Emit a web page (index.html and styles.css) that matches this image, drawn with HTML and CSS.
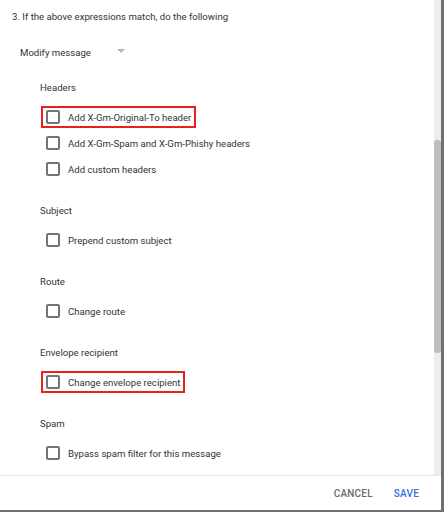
FILE: index.html
```html
<!DOCTYPE html>
<html>
<head>
<meta charset="utf-8">
<link rel="stylesheet" href="styles.css">
</head>
<body>
<div class="dialog">
  <div class="scroll">
    <div class="content">
      <div class="title">3. If the above expressions match, do the following</div>
      <div class="select">Modify message <span class="caret"></span></div>

      <div class="section">
        <div class="label">Headers</div>
        <div class="row"><span class="opt hl"><span class="box"></span>Add X-Gm-Original-To header</span></div>
        <div class="row"><span class="opt"><span class="box"></span>Add X-Gm-Spam and X-Gm-Phishy headers</span></div>
        <div class="row"><span class="opt"><span class="box"></span>Add custom headers</span></div>
      </div>

      <div class="section">
        <div class="label">Subject</div>
        <div class="row"><span class="opt"><span class="box"></span>Prepend custom subject</span></div>
      </div>

      <div class="section">
        <div class="label">Route</div>
        <div class="row"><span class="opt"><span class="box"></span>Change route</span></div>
      </div>

      <div class="section">
        <div class="label">Envelope recipient</div>
        <div class="row"><span class="opt hl"><span class="box"></span>Change envelope recipient</span></div>
      </div>

      <div class="section">
        <div class="label">Spam</div>
        <div class="row"><span class="opt"><span class="box"></span>Bypass spam filter for this message</span></div>
      </div>
    </div>
    <div class="track"><div class="thumb"></div></div>
  </div>
  <div class="footer">
    <span class="btn cancel">CANCEL</span>
    <span class="btn save">SAVE</span>
  </div>
</div>
</body>
</html>
```

FILE: styles.css
```css
html, body {
  margin: 0;
  padding: 0;
}
body {
  background: #6f6f6f;
  width: 444px;
  height: 512px;
  overflow: hidden;
  font-family: Roboto, "Liberation Sans", Arial, sans-serif;
  font-size: 9.6px;
  color: #333;
}
.dialog {
  width: 441px;
  height: 510px;
  background: #fff;
  display: flex;
  flex-direction: column;
}
.scroll {
  height: 475px;
  display: flex;
  border-bottom: 1px solid #e8e8e8;
  overflow: hidden;
}
.content {
  flex: 1;
  padding-top: 7px;
}
.title {
  line-height: 20px;
  padding-left: 12px;
}
.select {
  line-height: 20px;
  margin-top: 16px;
  padding-left: 20px;
  display: flex;
  align-items: center;
}
.caret {
  width: 0;
  height: 0;
  border-left: 4px solid transparent;
  border-right: 4px solid transparent;
  border-top: 4px solid #b5b5b5;
  margin-left: 26px;
  margin-top: -5px;
}
.section {
  padding-left: 40px;
  margin-top: 15px;
}
.section + .section {
  margin-top: 19px;
}
.label {
  line-height: 20px;
  margin-bottom: 6px;
}
.row {
  height: 26px;
  display: flex;
  align-items: center;
  padding-left: 3px;
}
.opt {
  display: inline-flex;
  align-items: center;
  height: 18px;
  padding: 0 3px 0 3px;
}
.opt.hl {
  outline: 2px solid #e8211c;
}
.box {
  width: 10px;
  height: 10px;
  border: 2px solid #747474;
  border-radius: 2px;
  margin-right: 8px;
}
.track {
  width: 7px;
  background: #ededed;
  padding-top: 140px;
}
.thumb {
  height: 213px;
  background: #bdbdbd;
  border-radius: 3px;
}
.footer {
  flex: 1;
  display: flex;
  align-items: center;
  justify-content: flex-end;
  padding-right: 22px;
  gap: 21px;
}
.btn {
  font-size: 10px;
  font-weight: 500;
  letter-spacing: 0.2px;
}
.cancel {
  color: #6b6b6b;
}
.save {
  color: #3a6fe0;
}
```
